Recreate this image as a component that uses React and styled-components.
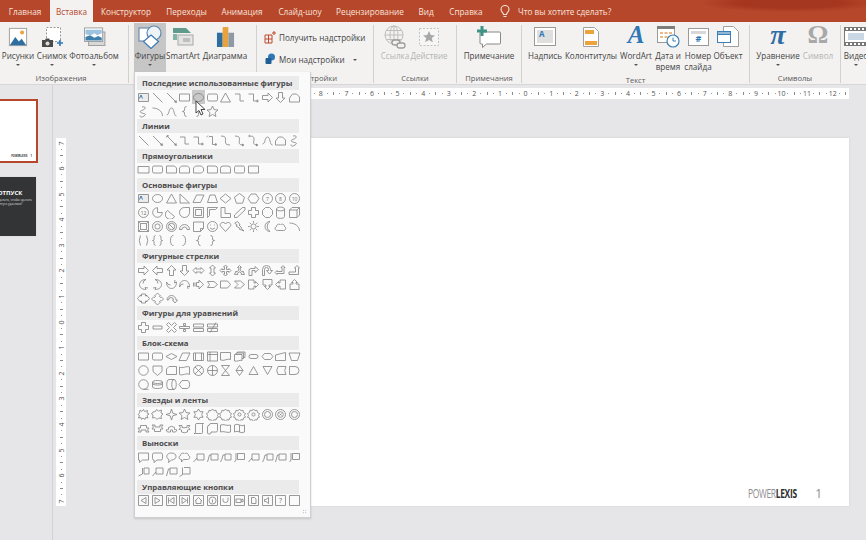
import React from 'react';
import styled, { createGlobalStyle } from 'styled-components';

const GlobalStyle = createGlobalStyle`
  html, body { margin: 0; padding: 0; background: #e6e5e8; }
  body { font-family: "Open Sans", "Noto Sans", sans-serif; }
`;

const Page = styled.div`
  position: relative;
  width: 866px;
  height: 540px;
  overflow: hidden;
  background: #e6e5e8;
  color: #444;
`;

/* ---- title bar with tabs ---- */
const TitleBar = styled.div`
  display: flex;
  align-items: stretch;
  height: 22px;
  background: radial-gradient(ellipse 90px 9px at 790px 3px, #a5361f 55%, transparent), #b7472a;
`;

const Tab = styled.div`
  display: flex;
  align-items: center;
  justify-content: center;
  flex: none;
  width: ${(p) => p.$w}px;
  font-size: 8.2px;
  color: ${(p) => (p.$active ? '#b7472a' : '#f6e3dc')};
  background: ${(p) => (p.$active ? '#f3f2f1' : 'transparent')};
`;

const SearchBox = styled.div`
  display: flex;
  align-items: center;
  gap: 8px;
  margin-left: 10px;
  font-size: 8.2px;
  color: #f6e3dc;
`;

/* ---- ribbon ---- */
const Ribbon = styled.div`
  display: flex;
  height: 63px;
  overflow: hidden;
  background: #f3f2f1;
  border-bottom: 1px solid #d8d7d7;
  box-sizing: border-box;
`;

const Group = styled.div`
  display: flex;
  flex-direction: column;
  flex: none;
  width: ${(p) => p.$w}px;
`;

const GroupItems = styled.div`
  display: flex;
  height: 49px;
  margin-top: 1px;
  padding-left: ${(p) => p.$pad || 0}px;
`;

const GroupLabel = styled.div`
  margin-top: 3px;
  padding-right: ${(p) => p.$shift || 0}px;
  font-size: 7.6px;
  line-height: 11px;
  text-align: center;
  color: #5a5a5a;
`;

const Separator = styled.div`
  flex: none;
  width: 1px;
  height: 58px;
  margin-top: 3px;
  background: #d2d1d1;
`;

const RibbonButton = styled.div`
  display: flex;
  flex-direction: column;
  align-items: center;
  flex: none;
  width: ${(p) => p.$w}px;
  background: ${(p) => (p.$pressed ? '#c6c6c6' : 'transparent')};
`;

const IconSlot = styled.div`
  display: flex;
  align-items: center;
  justify-content: center;
  height: 27px;
  flex: none;
`;

const ButtonLabel = styled.div`
  font-size: 8.1px;
  line-height: 11px;
  text-align: center;
  white-space: nowrap;
  color: ${(p) => (p.$off ? '#b4b4b4' : '#444')};
`;

const Caret = styled.div`
  flex: none;
  width: 0;
  height: 0;
  margin-top: 3px;
  border-left: 2px solid transparent;
  border-right: 2px solid transparent;
  border-top: 2px solid #555;
`;

const RowCaret = styled(Caret)`
  margin: 1px 0 0 5px;
`;

const AddinColumn = styled.div`
  display: flex;
  flex-direction: column;
  gap: 9px;
  padding: 7.5px 0 0 7px;
`;

const AddinRow = styled.div`
  display: flex;
  align-items: center;
  gap: 3px;
  height: 13px;
  font-size: 8.1px;
  white-space: nowrap;
  color: #444;
`;

const GlyphIcon = styled.span`
  display: block;
  height: 24px;
  margin-top: -3px;
  font-family: "Liberation Serif", "DejaVu Serif", serif;
  font-style: ${(p) => (p.$upright ? 'normal' : 'italic')};
  font-size: ${(p) => p.$size}px;
  line-height: 24px;
  font-weight: ${(p) => (p.$bold ? 700 : 400)};
  color: ${(p) => p.$color};
`;

/* ---- workspace ---- */
const Workspace = styled.div`
  display: flex;
  height: 455px;
`;

const ThumbPanel = styled.div`
  display: flex;
  flex-direction: column;
  align-items: flex-end;
  flex: none;
  gap: 14px;
  width: 53px;
  padding: 14px 14px 0 0;
  box-sizing: border-box;
  overflow: hidden;
  border-right: 1px solid #d3d2d4;
`;

const ThumbOne = styled.div`
  display: flex;
  flex: none;
  align-items: flex-end;
  justify-content: flex-end;
  gap: 3px;
  width: 110px;
  height: 64px;
  padding: 0 4px 3px 0;
  box-sizing: border-box;
  background: #fff;
  border: 2px solid #b7472a;
  font-size: 2.6px;
  font-weight: 700;
  color: #333;
`;

const ThumbTwo = styled.div`
  display: flex;
  flex-direction: column;
  align-items: center;
  justify-content: center;
  flex: none;
  width: 105px;
  height: 59px;
  margin-right: 2px;
  padding: 0 0 18px 53px;
  box-sizing: border-box;
  background: #333436;
  box-shadow: 0 0 0 1px #e0e0e2;
  color: #fff;
`;

const ThumbTitle = styled.div`
  font-size: 6px;
  font-weight: 700;
  line-height: 8px;
`;

const ThumbText = styled.div`
  margin-top: 1px;
  font-size: 3px;
  line-height: 4px;
  text-align: center;
  white-space: nowrap;
  color: #ddd;
`;

const Canvas = styled.div`
  display: flex;
  flex-direction: column;
  flex: 1;
  min-width: 0;
`;

const HRuler = styled.div`
  display: flex;
  flex: none;
  width: 557px;
  height: 11px;
  margin: 3px 0 0 239px;
  overflow: hidden;
  background: #fff;
`;

const Stage = styled.div`
  display: flex;
  padding-top: 39px;
`;

const VRuler = styled.div`
  display: flex;
  flex-direction: column;
  flex: none;
  width: 10px;
  height: 368px;
  margin-left: 3px;
  padding-top: 1.8px;
  box-sizing: border-box;
  overflow: hidden;
  background: #fff;
`;

const RulerCell = styled.div`
  display: grid;
  flex: none;
  ${(p) => (p.$vertical
    ? 'grid-template-rows: repeat(4, 6.4px); height: 25.6px;'
    : 'grid-template-columns: repeat(4, 6.4px); width: 25.6px;')}
  place-items: center;
  font-size: 7px;
  line-height: 7px;
  color: #555;
`;

const RulerNumber = styled.span`
  display: block;
  ${(p) => p.$vertical && 'transform: rotate(-90deg);'}
`;

const RulerDot = styled.i`
  display: block;
  width: 1px;
  height: 1px;
  background: #9a9a9a;
`;

const RulerBar = styled.i`
  display: block;
  background: #8a8a8a;
  ${(p) => (p.$vertical ? 'width: 3px; height: 1px;' : 'width: 1px; height: 3px;')}
`;

const Slide = styled.div`
  display: flex;
  align-items: center;
  justify-content: flex-end;
  flex: none;
  gap: 17px;
  width: 654px;
  height: 368px;
  margin-left: 129px;
  padding: 348px 27px 6px 0;
  box-sizing: border-box;
  background: #fff;
  box-shadow: 0 0 2px #d0cfd2;
`;

const Brand = styled.div`
  width: 50px;
  font-size: 13px;
  line-height: 14px;
  white-space: nowrap;
  color: #8d8d8d;
  letter-spacing: -0.5px;
  transform: scaleX(0.65);
  transform-origin: left center;
`;

const BrandStrong = styled.b`
  color: #2f2f2f;
`;

const PageNumber = styled.div`
  font-size: 12px;
  color: #8d8d8d;
`;

/* ---- shapes dropdown ---- */
const ShapeMenu = styled.div`
  position: absolute;
  left: 134px;
  top: 72px;
  width: 177px;
  height: 446px;
  padding: 4px 0 0 2px;
  box-sizing: border-box;
  background: #fafafa;
  border: 1px solid #cfcfcf;
  border-top: 0;
  box-shadow: 0 1px 2px rgba(0, 0, 0, 0.15);
`;

const MenuSection = styled.div`
  margin-bottom: 1.3px;
`;

const MenuHeader = styled.div`
  width: 162px;
  height: 14px;
  padding-left: 5px;
  box-sizing: border-box;
  background: #ebebeb;
  font-size: 7.8px;
  font-weight: 700;
  line-height: 14px;
  white-space: nowrap;
  color: #4c4a4c;
`;

const ShapeGrid = styled.div`
  display: grid;
  grid-template-columns: repeat(12, 13.7px);
  grid-auto-rows: 14px;
`;

const ShapeCell = styled.div`
  display: flex;
  align-items: center;
  justify-content: center;
  background: ${(p) => (p.$hot ? '#c8c8c8' : 'transparent')};
`;

const Grip = styled.div`
  position: absolute;
  right: 3px;
  bottom: 3px;
  width: 5px;
  height: 5px;
  background: radial-gradient(circle, #9a9a9a 0.6px, transparent 0.8px) 0 0 / 2.5px 2.5px;
`;

const Cursor = styled.svg`
  position: absolute;
  left: 195px;
  top: 100px;
`;

/* ---- gallery shapes, 13x13 box ---- */
const c = (x, y, r) => `M${x - r} ${y}a${r} ${r} 0 1 0 ${2 * r} 0a${r} ${r} 0 1 0 ${-2 * r} 0`;
const dot = (x, y) => `M${x - 0.4} ${y}h.8`;

const P = {
  rect: 'M1.5 3h10v7h-10z',
  wide: 'M1 3.5h11v6.5h-11z',
  round: 'M3 3h7q1.5 0 1.5 1.5v4q0 1.5-1.5 1.5h-7q-1.5 0-1.5-1.5v-4q0-1.5 1.5-1.5z',
  snip1: 'M1.5 3h8l2 2v5h-10z',
  snip2: 'M3.5 3h6l2 2v5h-10v-5z',
  snip3: 'M3.5 3h6l2 2v3l-2 2h-8v-5z',
  round1: 'M1.5 3h7.5q2.5 0 2.5 2.5v4.5h-10z',
  round2: 'M4 3h5q2.5 0 2.5 2.5v4.5h-10v-4.5q0-2.5 2.5-2.5z',
  oval: 'M1.5 6.5a5 4 0 1 0 10 0a5 4 0 1 0 -10 0',
  circle: c(6.5, 6.5, 4.8),
  line: 'M2 2l9.5 9.5',
  arrow: `M2 2l9 9${dot(11, 11)}M9.5 11l2 .5-.5-2z`,
  dbl: 'M2 2l9 9M1.5 3.5l.5-2 2 .5M9.5 11l2 .5-.5-2z',
  elbow: 'M2 3h5v7h4',
  elbowA: 'M1.5 3h5v7h3.5M10 8.8l1.5 1.2-1.5 1.2z',
  elbowD: 'M3 2.5h3.5v8h3M2 1.5l-1 1 1 1M9.5 9.5l1.5 1-1.5 1z',
  curve: 'M2 2c10 0-1 9 9 9',
  curveA: 'M2 2c10 0-1 9 8 9M9.5 10l1.5 1-1.5 1z',
  curveD: 'M3 2c9 0-1 9 7 9M3 1l-1.5 1 1.5 1M9.5 10l1.5 1-1.5 1z',
  wave: 'M1.5 10c3 0 2-7 5-7s2 8 5 8',
  free: 'M1.5 11v-4l3-4h4l3 3v5z',
  scrib: 'M5 2c4-1 4 2 1 3s-4 2-1 3 5 1 2 3-4 1-4-.5',
  arc: 'M1.5 3c5 0 10 3 10 8',
  lbrace: 'M8.5 1.5q-2 0-2 2v1.5q0 1.5-2 1.5 2 0 2 1.5v1.5q0 2 2 2',
  rbrace: 'M4.5 1.5q2 0 2 2v1.5q0 1.5 2 1.5-2 0-2 1.5v1.5q0 2-2 2',
  lbrack: 'M8.5 1.5q-3 0-3 5t3 5',
  rbrack: 'M4.5 1.5q3 0 3 5t-3 5',
  parens: 'M3.5 1.5q-2.5 5 0 10M9.5 1.5q2.5 5 0 10',
  braces: 'M4.5 1.5q-1.5 0-1.5 2v2q0 1-1.5 1 1.5 0 1.5 1v2q0 2 1.5 2M8.5 1.5q1.5 0 1.5 2v2q0 1 1.5 1-1.5 0-1.5 1v2q0 2-1.5 2',
  star: 'M6.5 1l1.6 3.6 3.9.4-3 2.6.9 3.9-3.4-2-3.4 2 .9-3.9-3-2.6 3.9-.4z',
  tri: 'M6.5 2l5 9h-10z',
  rtri: 'M2 2l9.5 9h-9.5z',
  para: 'M4.5 3h7.5l-3.5 7.5h-7.5z',
  trap: 'M4 3h5l2.5 7.5h-10z',
  diamond: 'M6.5 2l5.5 4.5-5.5 4.5-5.5-4.5z',
  flat: 'M6.5 3.5l5.5 3-5.5 3-5.5-3z',
  pent: 'M6.5 1.5l5 3.7-1.9 6h-6.2l-1.9-6z',
  hex: 'M4 2h5l3 4.5-3 4.5h-5l-3-4.5z',
  oct: 'M4.5 1.5h4l3 3v4l-3 3h-4l-3-3v-4z',
  num: c(6.5, 6.5, 5),
  pie: 'M6.5 6.5v-4.8a4.8 4.8 0 1 0 4.8 4.8z',
  chord: 'M9.5 10.5a4.8 4.8 0 1 1-7-6z',
  tear: 'M11.5 1.5v5a5 5 0 1 1-5-5z',
  frame: 'M1.5 1.5h10v10h-10zM3.5 3.5v6h6v-6z',
  half: 'M1.5 1.5h10l-2 2h-6v6l-2 2z',
  ell: 'M2 1.5h4v6h5.5v4h-9.5z',
  slash: 'M1.5 11.5v-2.5l8-7.5h2.5v2.5l-8 7.5z',
  plus: 'M4.5 1.5h4v3h3v4h-3v3h-4v-3h-3v-4h3z',
  can: 'M2.5 3c0-2.5 8-2.5 8 0v7.5c0 2.5-8 2.5-8 0zM2.5 3c0 2.5 8 2.5 8 0',
  cube: 'M1.5 4l2.5-2.5h7.5v7.5l-2.5 2.5h-7.5zM1.5 4h7.5v7.5M9 4l2.5-2.5',
  bevel: 'M1.5 1.5h10v10h-10zM3.5 3.5h6v6h-6zM1.5 1.5l2 2M11.5 1.5l-2 2M1.5 11.5l2-2M11.5 11.5l-2-2',
  donut: `${c(6.5, 6.5, 5)}${c(6.5, 6.5, 2.6)}`,
  no: `${c(6.5, 6.5, 5)}${c(6.5, 6.5, 3.2)}M4 4l5 5`,
  block: 'M1.5 9.5a5 5 0 0 1 10 0h-2.5a2.5 2.5 0 0 0-5 0z',
  fold: 'M1.5 2h10v6.5l-3 3h-7zM8.5 11.5v-3h3',
  smile: `${c(6.5, 6.5, 5)}M4 8q2.5 2.5 5 0${dot(4.5, 5)}${dot(8.5, 5)}`,
  heart: 'M6.5 11.5l-5-5.5c-1.5-2.5 3-5.5 5-2 2-3.5 6.5-.5 5 2z',
  bolt: 'M4.5 1.5l2.5 3-1 .5 2.5 2.5-.7.5 3.2 3-5-2 .7-.8-3.7-2.2 1.2-.8-2.5-2z',
  sun: `${c(6.5, 6.5, 2.6)}M6.5 1v1.8M6.5 10.2v1.8M1 6.5h1.8M10.2 6.5h1.8M2.7 2.7l1.2 1.2M9.1 9.1l1.2 1.2M10.3 2.7l-1.2 1.2M3.9 9.1l-1.2 1.2`,
  moon: 'M9 1.5a5 5 0 1 0 0 10 6 6 0 0 1 0-10z',
  cloud: 'M3.5 10.5c-3 0-3-3.5-1-4 0-2.5 3-3 4-1.5 1-1.5 4-1 4 1.5 2 .5 1.5 4-1 4z',
  arR: 'M1.5 4.5h5.5v-2.5l4.5 4.5-4.5 4.5v-2.5h-5.5z',
  arL: 'M11.5 4.5h-5.5v-2.5l-4.5 4.5 4.5 4.5v-2.5h5.5z',
  arU: 'M4.5 11.5v-5.5h-2.5l4.5-4.5 4.5 4.5h-2.5v5.5z',
  arD: 'M4.5 1.5v5.5h-2.5l4.5 4.5 4.5-4.5h-2.5v-5.5z',
  arLR: 'M1 6.5l3-3v1.5h5v-1.5l3 3-3 3v-1.5h-5v1.5z',
  arUD: 'M6.5 1l3 3h-1.5v5h1.5l-3 3-3-3h1.5v-5h-1.5z',
  quad: 'M6.5 1l2 2h-1v2.5h2.5v-1l2 2-2 2v-1h-2.5v2.5h1l-2 2-2-2h1v-2.5h-2.5v1l-2-2 2-2v1h2.5v-2.5h-1z',
  bentR: 'M2 11.5v-5q0-2 2-2h4v-2l3.5 3-3.5 3v-2h-3v5z',
  uturn: 'M1.5 11.5v-6q0-4 4-4t4 4v1h2l-3 3.5-3-3.5h2v-1q0-2-2-2t-2 2v6z',
  leftUp: 'M1 8.5l2-2v1h5v-4h-1l2-2 2 2h-1v6h-7v1z',
  bentUp: 'M1 8h6.5v-4h-1l2.5-2.5 2.5 2.5h-1v6.5h-9.5z',
  tripleA: 'M6.5 1.5l2 2h-1.2v3l2.2 1.5.5-1 1.5 3.5-3.5-.2.6-1-2.1-1.5-2.1 1.5.6 1-3.5.2 1.5-3.5.5 1 2.2-1.5v-3h-1.2z',
  curveR: 'M9 1.5c-5 0-6.5 3-6.5 5s1.5 5 6.5 5l-1-2 3 .5M9 1.5q-3 1-3 4',
  curveL: 'M4 1.5c5 0 6.5 3 6.5 5s-1.5 5-6.5 5l1-2-3 .5M4 1.5q3 1 3 4',
  curveU: 'M1.5 4c0 5 3 6.5 5 6.5s5-1.5 5-6.5l-2 1 .5-3M1.5 4q1 3 4 3',
  curveDn: 'M1.5 9c0-5 3-6.5 5-6.5s5 1.5 5 6.5l-2-1 .5 3M1.5 9q1-3 4-3',
  striped: 'M1.5 4.5v4M3 4.5v4M4.5 4.5h2.5v-2.5l4.5 4.5-4.5 4.5v-2.5h-2.5z',
  notched: 'M1.5 3.5h6.5l3.5 3-3.5 3h-6.5l2-3z',
  pentA: 'M1.5 3h7l3 3.5-3 3.5h-7z',
  chevron: 'M1.5 3h6l4 3.5-4 3.5h-6l3.5-3.5z',
  callR: 'M1.5 2h5.5v3h1.5v-1.5l3 3-3 3v-1.5h-1.5v3h-5.5z',
  callD: 'M2 1.5h9v5.5h-3v1.5h1.5l-3 3-3-3h1.5v-1.5h-3z',
  callL: 'M11.5 2h-5.5v3h-1.5v-1.5l-3 3 3 3v-1.5h1.5v3h5.5z',
  callU: 'M2 11.5h9v-5.5h-3v-1.5h1.5l-3-3-3 3h1.5v1.5h-3z',
  callLR: 'M4.5 2h4v2h1v-1l3 3.5-3 3.5v-1h-1v2h-4v-2h-1v1l-3-3.5 3-3.5v1h1z',
  callQ: 'M6.5 1l3 3-1 .5 1 1 1-.5 2 2-2 2-1-.5-1 1 1 .5-3 3-3-3 1-.5-1-1-1 .5-2-2 2-2 1 .5 1-1-1-.5z',
  circA: 'M2 8a4.5 4.5 0 0 1 9 0h1.5l-2.5 3-2.5-3h1a2.5 2.5 0 0 0-5 0z',
  minus: 'M2 5h9v3h-9z',
  times: 'M3.5 1.5l3 3 3-3 2 2-3 3 3 3-2 2-3-3-3 3-2-2 3-3-3-3z',
  divide: 'M1.5 5.5h10v2h-10zM5.5 2.5h2v2h-2zM5.5 8.5h2v2h-2z',
  equal: 'M1.5 3h10v3h-10zM1.5 7.5h10v3h-10z',
  ne: 'M1.5 3h10v3h-10zM1.5 7.5h10v3h-10zM4 11.5l6-10',
  predef: 'M1.5 3h10v7.5h-10zM3.5 3v7.5M9.5 3v7.5',
  internal: 'M1.5 2h10v9h-10zM1.5 4.5h10M4 2v9',
  doc: 'M1.5 2.5h10v7c-3-1.5-6 2-10 .5z',
  multi: 'M1.5 4.5h7.5v6c-2-1-5 1.5-7.5.5zM3 4.5v-1.5h7.5v5.5h-1.5M4.5 3v-1h7.5v5.5h-1.5',
  term: 'M4 4.5h5a2 2 0 0 1 0 4h-5a2 2 0 0 1 0-4z',
  prep: 'M3.5 3.5h6l2.5 3-2.5 3h-6l-2.5-3z',
  manIn: 'M1.5 5l10-2.5v8h-10z',
  manOp: 'M1 3h11l-2.5 7.5h-6z',
  offp: 'M2 2h9v5.5l-4.5 4-4.5-4z',
  card: 'M4 2.5h7.5v8h-10v-5.5z',
  tape: 'M1.5 3c3 2 7-1.5 10 0v7.5c-3-2-7 1.5-10 0z',
  junc: `${c(6.5, 6.5, 5)}M3 3l7 7M10 3l-7 7`,
  orf: `${c(6.5, 6.5, 5)}M6.5 1.5v10M1.5 6.5h10`,
  collate: 'M2.5 1.5h8l-8 10h8z',
  sort: 'M6.5 1.5l3.5 5-3.5 5-3.5-5zM3 6.5h7',
  extract: 'M6.5 2.5l4.5 8h-9z',
  merge: 'M2 2.5h9l-4.5 8z',
  stored: 'M4 2.5h8q-2.5 4 0 8h-8q-2.5-4 0-8z',
  delay: 'M1.5 2.5h5.5a4 4 0 0 1 0 8h-5.5z',
  seq: `${c(6.5, 6.5, 4.8)}M6.5 11.3h5`,
  disk: 'M1.5 4c0-2 10-2 10 0v5c0 2-10 2-10 0zM1.5 4c0 2 10 2 10 0M1.5 5.5c0 2 10 2 10 0',
  drum: 'M4 1.5h5c3 0 3 10 0 10h-5c-3 0-3-10 0-10zM9 1.5c-3 0-3 10 0 10',
  display: 'M4 2.5h5c3.5 0 3.5 8 0 8h-5l-3-4z',
  ex1: 'M3 2l2 1.5 1.5-2 1 2 3-1-.5 2.5 2 1-2 1.5 1 2.5-2.5-.5-.5 2-2-1.5-1.5 1.5-.5-2-2.5.5 1-2.5-1.5-1 1.5-1.5z',
  ex2: 'M2 4l2.5-.5 1-2 2 1.5 3-1-.5 3 2 1-2 2 .5 2.5-3-.5-1.5 1.5-2-2-2.5.5.5-3-1.5-1z',
  st4: 'M6.5 1l1.3 4.2 4.2 1.3-4.2 1.3-1.3 4.2-1.3-4.2-4.2-1.3 4.2-1.3z',
  st6: 'M6.5 1l1.6 2.7h3l-1.5 2.8 1.5 2.8h-3l-1.6 2.7-1.6-2.7h-3l1.5-2.8-1.5-2.8h3z',
  st8: 'M6.5 1l1.5 1.8 2-.6.5 2.3 2 1-1 2 1 1.7-2 .8-.5 2-2-.3-1.5 1.3-1.5-1.3-2 .3-.5-2-2-.8 1-1.7-1-2 2-1 .5-2.3 2 .6z',
  st10: `M6.5 1l1.5 1.8 2-.6.5 2.3 2 1-1 2 1 1.7-2 .8-.5 2-2-.3-1.5 1.3-1.5-1.3-2 .3-.5-2-2-.8 1-1.7-1-2 2-1 .5-2.3 2 .6z${c(6.5, 6.5, 1.6)}`,
  badge: `${c(6.5, 6.5, 5)}${c(6.5, 6.5, 3)}`,
  badgeX: `${c(6.5, 6.5, 5)}${c(6.5, 6.5, 2.8)}M5.5 5.5l2 2M7.5 5.5l-2 2`,
  ribU: 'M1 6h2.5v-2.5h6v2.5h2.5l-1.5 2 1.5 2h-3v-2h-5v2h-3l1.5-2z',
  ribD: 'M1 3h3v2h5v-2h3l-1.5 2 1.5 2h-2.5v2.5h-6v-2.5h-2.5l1.5-2z',
  ribCU: 'M1 8q1.5-.5 2.5-.5v-2q3-2.5 6 0v2q1 0 2.5.5l-1.5 2h-3v-2q-1.5-.5-2 0v2h-3z',
  ribCD: 'M1 3.5h3v2q1.5 .5 5 0v-2h3l-1.5 2 1.5 2q-1.5 0-2.5.5v2q-3 1.5-6 0v-2q-1-.5-2.5-.5l1.5-2z',
  scrollV: 'M3.5 11.5h6q1 0 1-1v-8q0-1 1-1h-6.5q-1.5 0-1.5 1v8q0 1-1.5 1h1.5z',
  scrollH: 'M3 3.5q0-2 2-2h6.5v7q0 1.5-1.5 1.5h-5v1q0 1-2 1t-1.5-2v-5.5q0-1 1.5-1z',
  flag: 'M1.5 3c3-1.5 7 1.5 10 0v7c-3 1.5-7-1.5-10 0z',
  flag2: 'M1.5 3q2.5-1.5 5 0t5 0v7q-2.5 1.5-5 0t-5 0zM6.5 3v7',
  cbRect: 'M1.5 2h10v7h-6l-3 2.5v-2.5h-1z',
  cbRound: 'M3 2h7q1.5 0 1.5 1.5v4q0 1.5-1.5 1.5h-4l-3 2.5v-2.5q-1.5 0-1.5-1.5v-4q0-1.5 1.5-1.5z',
  cbOval: 'M6.5 2c6-.2 6 7 0 7l-3 2.5.5-3c-3.5-1.5-3-6.5 2.5-6.5z',
  cbCloud: 'M3.5 8.5c-3 0-3-3.5-1-4 0-2.5 3-3 4-1.5 1-1.5 4-1 4 1.5 2 .5 1.5 4-1 4h-4l-2 2.5z',
  ln1: 'M5 3h7v6h-7zM5 7l-3.5 4',
  ln2: 'M5 3h7v6h-7zM5 4h-1.5l-2 7',
  ln3: 'M6 3h6v6h-6zM6 4h-2l-1 4-1.5 3',
  ln4: 'M4.5 2.5h7v6h-7zM3 2v7l-1.5 2',
  acc: 'M7 3h5v6h-5M7 3v6M5.5 3v6l-4 2',
  acc2: 'M6 2.5h6M6 9h6M12 2.5v6.5M4.5 2.5v6.5h1l-4 2.5',
};

// a button frame with something inside
const btn = (inner) => `M1.5 1.5h10v10h-10z${inner}`;
const B = {
  back: btn('M9 3.5v6l-5-3z'),
  fwd: btn('M4 3.5v6l5-3z'),
  begin: btn('M9 3.5v6l-4.5-3zM3.5 3.5v6'),
  end: btn('M4 3.5v6l4.5-3zM9.5 3.5v6'),
  home: btn('M3 7l3.5-3.5 3.5 3.5M4 6.5v3h5v-3'),
  info: btn(`${c(6.5, 6.5, 3.5)}M6.5 5.5v3`),
  ret: btn('M4 4.5v2q0 2 2.5 2t2.5-2v-3'),
  movie: btn('M3 5h5v3.5h-5zM8 6l2-1v3l-2-1'),
  page: btn('M4.5 3.5h3l1.5 1.5v4.5h-4.5z'),
  sound: btn('M3.5 5.5h1.5l2.5-2v6l-2.5-2h-1.5z'),
  blank: 'M1.5 1.5h10v10h-10z',
};

const Shape = ({ name }) => {
  if (name === 'txt') {
    return (
      <svg width="13" height="13" viewBox="0 0 13 13">
        <path d="M1.5 2.5h10v8h-10z" fill="#ececec" stroke="#808080" strokeWidth=".8" />
        <path d="M2.5 7.5l1.5-3.5 1.5 3.5" fill="none" stroke="#2f6db0" strokeWidth=".9" />
      </svg>
    );
  }
  const labels = { n7: '7', n8: '8', n10: '10', n12: '12', help: '?' };
  const d = labels[name]
    ? (name === 'help' ? B.blank : P.num)
    : P[name] || B[name];
  return (
    <svg width="13" height="13" viewBox="0 0 13 13">
      <path d={d} fill="none" stroke="#808080" strokeWidth=".8" strokeLinejoin="round" />
      {labels[name] && (
        <text x="6.5" y="8.8" textAnchor="middle" fontSize={name === 'help' ? 7 : 5} fill="#6e6e6e" fontFamily="Open Sans, sans-serif">
          {labels[name]}
        </text>
      )}
    </svg>
  );
};

const sections = [
  ['Последние использованные фигуры', [
    'txt', 'line', 'arrow', 'rect', 'oval', 'round', 'tri', 'elbow', 'elbowA', 'arR', 'arD', 'free',
    'scrib', 'arc', 'wave', 'lbrace', 'rbrace', 'star',
  ]],
  ['Линии', ['line', 'arrow', 'dbl', 'elbow', 'elbowA', 'elbowD', 'curve', 'curveA', 'curveD', 'wave', 'free', 'scrib']],
  ['Прямоугольники', ['wide', 'round', 'snip1', 'snip2', 'snip3', 'round1', 'round2', 'round', 'rect']],
  ['Основные фигуры', [
    'txt', 'oval', 'tri', 'rtri', 'para', 'trap', 'diamond', 'pent', 'hex', 'n7', 'n8', 'n10',
    'n12', 'pie', 'chord', 'tear', 'frame', 'half', 'ell', 'slash', 'plus', 'oct', 'can', 'cube',
    'bevel', 'donut', 'no', 'block', 'fold', 'smile', 'heart', 'bolt', 'sun', 'moon', 'cloud', 'arc',
    'parens', 'braces', 'lbrack', 'rbrack', 'lbrace', 'rbrace',
  ]],
  ['Фигурные стрелки', [
    'arR', 'arL', 'arU', 'arD', 'arLR', 'arUD', 'quad', 'tripleA', 'bentR', 'uturn', 'leftUp', 'bentUp',
    'curveR', 'curveL', 'curveU', 'curveDn', 'striped', 'notched', 'pentA', 'chevron', 'callR', 'callD', 'callL', 'callU',
    'callLR', 'callQ', 'circA',
  ]],
  ['Фигуры для уравнений', ['plus', 'minus', 'times', 'divide', 'equal', 'ne']],
  ['Блок-схема', [
    'rect', 'round', 'flat', 'para', 'predef', 'internal', 'doc', 'multi', 'term', 'prep', 'manIn', 'manOp',
    'circle', 'offp', 'card', 'tape', 'junc', 'orf', 'collate', 'sort', 'extract', 'merge', 'stored', 'delay',
    'seq', 'disk', 'drum', 'display',
  ]],
  ['Звезды и ленты', [
    'ex1', 'ex2', 'st4', 'star', 'st6', 'st8', 'st8', 'st10', 'st10', 'badge', 'badgeX', 'badge',
    'ribU', 'ribD', 'ribCU', 'ribCD', 'scrollV', 'scrollH', 'flag', 'flag2',
  ]],
  ['Выноски', [
    'cbRect', 'cbRound', 'cbOval', 'cbCloud', 'ln1', 'ln2', 'ln3', 'ln4', 'ln1', 'ln3', 'ln2', 'ln4',
    'acc', 'ln1', 'ln2', 'acc2',
  ]],
  ['Управляющие кнопки', ['back', 'fwd', 'begin', 'end', 'home', 'info', 'ret', 'movie', 'page', 'sound', 'help', 'blank']],
];

const hRuler = [9, 8, 7, 6, 5, 4, 3, 2, 1, 0, 1, 2, 3, 4, 5, 6, 7, 8, 9, 10, 11, 12];
const vRuler = [7, 6, 5, 4, 3, 2, 1, 0, 1, 2, 3, 4, 5, 6, 7];

const Ruler = ({ values, vertical }) => values.map((n, i) => (
  <RulerCell key={i} $vertical={vertical}>
    <RulerNumber $vertical={vertical}>{n}</RulerNumber>
    <RulerDot />
    <RulerBar $vertical={vertical} />
    <RulerDot />
  </RulerCell>
));

/* ---- ribbon icons ---- */
const PicturesIcon = () => (
  <svg width="20" height="20" viewBox="0 0 22 22">
    <rect x="1.5" y="1.5" width="19" height="19" fill="#fff" stroke="#9a9a9a" />
    <path d="M2 20l6-9 4 5 3-3 5 7z" fill="#2f6f9f" />
    <circle cx="15.5" cy="6" r="2.2" fill="#eea33a" />
  </svg>
);

const ScreenshotIcon = () => (
  <svg width="24" height="22" viewBox="0 0 24 22">
    <rect x="6.5" y="1.5" width="14" height="14" fill="#fff" stroke="#999" strokeDasharray="2 1.5" />
    <path d="M2 14h3l1-1.5h3l1 1.5h3v7h-11z" fill="#4a4a4a" />
    <circle cx="7.5" cy="17.5" r="2" fill="#ddd" />
    <path d="M20 14v6M17 17h6" stroke="#2f78b5" strokeWidth="1.6" />
  </svg>
);

const AlbumIcon = () => (
  <svg width="23" height="19" viewBox="0 0 24 21">
    <rect x="5.5" y="5.5" width="18" height="15" fill="#d8d8d8" stroke="#999" />
    <rect x="1" y="1" width="20" height="15" fill="#fff" stroke="#999" />
    <path d="M2 3h18v4l-5 2-3-2-4 2-6-1z" fill="#9dc3e0" />
    <path d="M2 15v-4l5-2 5 3 4-2 4 2v3z" fill="#3f7fae" />
  </svg>
);

const ShapesIcon = () => (
  <svg width="24" height="24" viewBox="0 0 24 24">
    <rect x="1" y="3" width="13" height="13" fill="#fff" stroke="#6f8fae" strokeWidth="1.2" />
    <circle cx="16" cy="8" r="7" fill="#eef3f8" stroke="#5b87ad" strokeWidth="1.2" />
    <path d="M13 10l7.5 6.5-7.5 7-7.5-7z" fill="#fff" stroke="#3d7ab0" strokeWidth="1.2" />
  </svg>
);

const SmartArtIcon = () => (
  <svg width="22" height="20" viewBox="0 0 22 20">
    <path d="M1 1h13l5 5h-18z" fill="#5f9a8c" />
    <rect x="6" y="8" width="15" height="10" fill="#e4e4e4" stroke="#a8a8a8" />
    <path d="M1 7h4v6h-4z" fill="#7fb4a6" />
    <path d="M11 12h7M11 14h7" stroke="#999" />
  </svg>
);

const ChartIcon = () => (
  <svg width="19" height="20" viewBox="0 0 20 21">
    <rect x="1" y="6" width="6" height="15" fill="#2f6f9f" />
    <rect x="7" y="0" width="6" height="21" fill="#e8a33d" />
    <rect x="13" y="6" width="6" height="15" fill="#8d9aa5" />
  </svg>
);

const StoreIcon = () => (
  <svg width="12" height="13" viewBox="0 0 12 13">
    <path d="M1 4h7v8h-7zM1 8h7M4.5 4v8" fill="none" stroke="#c0492c" />
    <path d="M10 0v4M8 2h4" stroke="#c0492c" />
  </svg>
);

const MyAddinsIcon = () => (
  <svg width="12" height="12" viewBox="0 0 11 12">
    <circle cx="7" cy="4" r="3.5" fill="#2f78b5" />
    <rect x="1" y="5" width="6" height="6" rx="1" fill="#1f5f96" />
  </svg>
);

const LinkIcon = () => (
  <svg width="22" height="24" viewBox="0 0 22 24">
    <g fill="none" stroke="#bdbdbd">
      <circle cx="10" cy="10" r="9" />
      <ellipse cx="10" cy="10" rx="4" ry="9" />
      <path d="M1 10h18M2.5 5.5h15M2.5 14.5h15M10 1v18" />
    </g>
    <g fill="#f3f2f1" stroke="#9c9c9c" strokeWidth="1.3">
      <rect x="8" y="15" width="8" height="5" rx="2.5" />
      <rect x="13" y="18" width="8" height="5" rx="2.5" />
    </g>
  </svg>
);

const ActionIcon = () => (
  <svg width="20" height="18" viewBox="0 0 20 18">
    <rect x=".5" y=".5" width="19" height="17" fill="#f6f6f6" stroke="#c2c2c2" strokeDasharray="2 1.5" />
    <path d="M10 3l1.8 4 4.2.4-3.2 2.7 1 4.2-3.8-2.3-3.8 2.3 1-4.2-3.2-2.7 4.2-.4z" fill="#a8a8a8" />
  </svg>
);

const CommentIcon = () => (
  <svg width="24" height="22" viewBox="0 0 24 22">
    <path d="M4 6h18.5q1 0 1 1v10q0 1-1 1h-13l-4 3.5v-3.5h-1.5q-1 0-1-1v-10q0-1 1-1z" fill="#fff" stroke="#888" />
    <path d="M5 0v10M0 5h10" stroke="#3f9486" strokeWidth="3" />
  </svg>
);

const TextBoxIcon = () => (
  <svg width="22" height="19" viewBox="0 0 22 19">
    <rect x=".5" y=".5" width="21" height="18" fill="#fff" stroke="#999" />
    <rect x="3" y="3" width="16" height="13" fill="#dfdfdf" />
    <text x="5" y="10" fontSize="8" fontWeight="700" fill="#2f78b5" fontFamily="Open Sans, sans-serif">A</text>
  </svg>
);

const HeaderFooterIcon = () => (
  <svg width="16" height="20" viewBox="0 0 16 20">
    <path d="M.5.5h11l4 4v15h-15z" fill="#fff" stroke="#a0a0a0" />
    <rect x="2" y="3" width="9" height="4" fill="#eea33a" />
    <rect x="2" y="14" width="12" height="4" fill="#eea33a" />
  </svg>
);

const DateIcon = () => (
  <svg width="23" height="22" viewBox="0 0 23 22">
    <rect x=".5" y=".5" width="17" height="16" fill="#fff" stroke="#999" />
    <rect x="0" y="0" width="18" height="3" fill="#7d7d7d" />
    <path d="M3 6h3v2h-3zM7.5 6h3v2h-3zM12 6h3v2h-3zM3 10h3v2h-3zM7.5 10h3v2h-3z" fill="#e9b98a" />
    <circle cx="16" cy="15" r="6" fill="#fff" stroke="#3a7fb5" strokeWidth="1.2" />
    <path d="M16 11.5v3.5h3" fill="none" stroke="#3a7fb5" />
  </svg>
);

const NumberIcon = () => (
  <svg width="21" height="18" viewBox="0 0 21 18">
    <rect x=".5" y=".5" width="20" height="17" fill="#fff" stroke="#999" />
    <rect x="3" y="3" width="15" height="3" fill="#d8d8d8" />
    <text x="10.5" y="14" textAnchor="middle" fontSize="9" fontWeight="700" fill="#2f78b5" fontFamily="Open Sans, sans-serif">#</text>
  </svg>
);

const ObjectIcon = () => (
  <svg width="22" height="21" viewBox="0 0 22 21">
    <path d="M6.5.5h10l5 5v15h-15z" fill="#fff" stroke="#a0a0a0" />
    <rect x=".5" y="5.5" width="13" height="11" fill="#fff" stroke="#3a7fb5" />
    <rect x=".5" y="5.5" width="13" height="3" fill="#8fb8d8" stroke="#3a7fb5" />
  </svg>
);

const VideoIcon = () => (
  <svg width="24" height="19" viewBox="0 0 24 19">
    <rect x=".5" y=".5" width="23" height="18" fill="#fff" stroke="#777" />
    <rect x="0" y="0" width="24" height="4" fill="#777" />
    <rect x="0" y="15" width="24" height="4" fill="#777" />
    <path d="M2 1h2v2h-2zM6 1h2v2h-2zM10 1h2v2h-2zM14 1h2v2h-2zM18 1h2v2h-2zM2 16h2v2h-2zM6 16h2v2h-2zM10 16h2v2h-2zM14 16h2v2h-2zM18 16h2v2h-2z" fill="#fff" />
    <rect x="4" y="6" width="16" height="7" fill="#c9d8e4" />
  </svg>
);

const BulbIcon = () => (
  <svg width="10" height="13" viewBox="0 0 10 13">
    <path d="M3.5 9.5c0-2-2.5-2.5-2.5-5a4 4 0 0 1 8 0c0 2.5-2.5 3-2.5 5zM3.5 11.5h3" fill="none" stroke="#f6e3dc" strokeWidth="1.1" />
  </svg>
);

const Button = ({ w, icon, label, off, caret, pressed }) => (
  <RibbonButton $w={w} $pressed={pressed}>
    <IconSlot>{icon}</IconSlot>
    <ButtonLabel $off={off}>
      {label.map((line) => <div key={line}>{line}</div>)}
    </ButtonLabel>
    {caret && <Caret />}
  </RibbonButton>
);

const tabs = [
  ['Главная', 50], ['Вставка', 43], ['Конструктор', 66], ['Переходы', 55], ['Анимация', 56],
  ['Слайд-шоу', 60], ['Рецензирование', 80], ['Вид', 32], ['Справка', 48],
];

export default function App() {
  return (
    <Page>
      <GlobalStyle />
      <TitleBar>
        {tabs.map(([t, w]) => <Tab key={t} $w={w} $active={t === 'Вставка'}>{t}</Tab>)}
        <SearchBox>
          <BulbIcon />
          Что вы хотите сделать?
        </SearchBox>
      </TitleBar>

      <Ribbon>
        <Group $w={128}>
          <GroupItems $pad={1}>
            <Button w={34} icon={<PicturesIcon />} label={['Рисунки']} caret />
            <Button w={34} icon={<ScreenshotIcon />} label={['Снимок']} caret />
            <Button w={50} icon={<AlbumIcon />} label={['Фотоальбом']} caret />
          </GroupItems>
          <GroupLabel $shift={6}>Изображения</GroupLabel>
        </Group>
        <Separator />
        <Group $w={127}>
          <GroupItems $pad={5}>
            <Button w={32} icon={<ShapesIcon />} label={['Фигуры']} caret pressed />
            <Button w={34} icon={<SmartArtIcon />} label={['SmartArt']} />
            <Button w={50} icon={<ChartIcon />} label={['Диаграмма']} />
          </GroupItems>
        </Group>
        <Separator />
        <Group $w={116}>
          <GroupItems>
            <AddinColumn>
              <AddinRow><StoreIcon />Получить надстройки</AddinRow>
              <AddinRow><MyAddinsIcon />Мои надстройки<RowCaret /></AddinRow>
            </AddinColumn>
          </GroupItems>
          <GroupLabel>Надстройки</GroupLabel>
        </Group>
        <Separator />
        <Group $w={82}>
          <GroupItems $pad={4}>
            <Button w={34} off icon={<LinkIcon />} label={['Ссылка']} />
            <Button w={34} off icon={<ActionIcon />} label={['Действие']} />
          </GroupItems>
          <GroupLabel>Ссылки</GroupLabel>
        </Group>
        <Separator />
        <Group $w={64}>
          <GroupItems>
            <Button w={64} icon={<CommentIcon />} label={['Примечание']} />
          </GroupItems>
          <GroupLabel>Примечания</GroupLabel>
        </Group>
        <Separator />
        <Group $w={227}>
          <GroupItems $pad={5}>
            <Button w={36} icon={<TextBoxIcon />} label={['Надпись']} />
            <Button w={56} icon={<HeaderFooterIcon />} label={['Колонтитулы']} />
            <Button w={34} icon={<GlyphIcon $size={25} $bold $color="#2f78b5">A</GlyphIcon>} label={['WordArt']} caret />
            <Button w={30} icon={<DateIcon />} label={['Дата и', 'время']} />
            <Button w={30} icon={<NumberIcon />} label={['Номер', 'слайда']} />
            <Button w={30} icon={<ObjectIcon />} label={['Объект']} />
          </GroupItems>
          <GroupLabel>Текст</GroupLabel>
        </Group>
        <Separator />
        <Group $w={90}>
          <GroupItems $pad={4}>
            <Button w={48} icon={<GlyphIcon $size={28} $bold $color="#2f6da4">π</GlyphIcon>} label={['Уравнение']} caret />
            <Button w={32} off icon={<GlyphIcon $size={26} $bold $upright $color="#a8a8a8">Ω</GlyphIcon>} label={['Символ']} />
          </GroupItems>
          <GroupLabel>Символы</GroupLabel>
        </Group>
        <Separator />
        <Group $w={30}>
          <GroupItems>
            <Button w={30} icon={<VideoIcon />} label={['Видео']} caret />
          </GroupItems>
        </Group>
      </Ribbon>

      <Workspace>
        <ThumbPanel>
          <ThumbOne><span>POWERLEXIS</span><span>1</span></ThumbOne>
          <ThumbTwo>
            <ThumbTitle>ОТПУСК</ThumbTitle>
            <ThumbText>Что же делать, чтобы сделать<br />отпуск удачным?</ThumbText>
          </ThumbTwo>
        </ThumbPanel>
        <Canvas>
          <HRuler><Ruler values={hRuler} /></HRuler>
          <Stage>
            <VRuler><Ruler values={vRuler} vertical /></VRuler>
            <Slide>
              <Brand>POWER<BrandStrong>LEXIS</BrandStrong></Brand>
              <PageNumber>1</PageNumber>
            </Slide>
          </Stage>
        </Canvas>
      </Workspace>

      <ShapeMenu>
        {sections.map(([title, items]) => (
          <MenuSection key={title}>
            <MenuHeader>{title}</MenuHeader>
            <ShapeGrid>
              {items.map((name, i) => (
                <ShapeCell key={i} $hot={title.startsWith('Последние') && i === 4}>
                  <Shape name={name} />
                </ShapeCell>
              ))}
            </ShapeGrid>
          </MenuSection>
        ))}
        <Grip />
      </ShapeMenu>
      <Cursor width="11" height="16" viewBox="0 0 11 16">
        <path d="M1 1v12l3-2.5 2 4.5 2-1-2-4.5h4z" fill="#fff" stroke="#333" strokeWidth=".9" />
      </Cursor>
    </Page>
  );
}
